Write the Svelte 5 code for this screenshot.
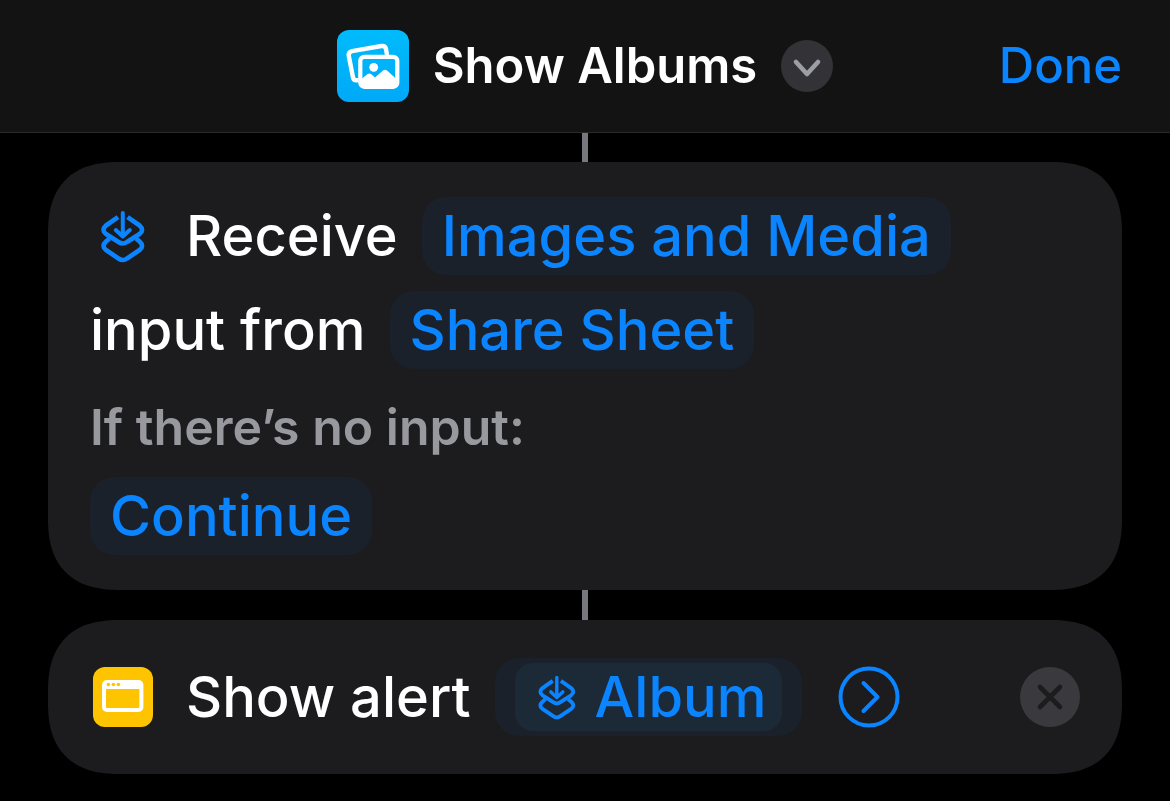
<script lang="ts">
  interface Props {
    title?: string;
    inputTypes?: string;
    source?: string;
    fallback?: string;
    variable?: string;
  }
  let {
    title = 'Show Albums',
    inputTypes = 'Images and Media',
    source = 'Share Sheet',
    fallback = 'Continue',
    variable = 'Album',
  }: Props = $props();
</script>

{#snippet inputIcon()}
  <svg class="input-icon" viewBox="0 0 46 54" aria-hidden="true">
    <g fill="none" stroke="currentColor" stroke-width="4.6" stroke-linejoin="round">
      <path d="M18 8.2 L6 16.5 Q1 21 6 25 L18.5 33 Q22.8 36 27 33 L39.6 25 Q44.6 21 39.6 16.5 L27.6 8.2" />
      <path d="M9.5 29.5 L6 32.5 Q1 37 6 41 L18.5 49.5 Q22.8 52.5 27 49.5 L39.6 41 Q44.6 37 39.6 32.5 L36 29.5" />
      <path d="M22.8 4 V27 M15.8 21 L22.8 27.5 L29.8 21" stroke-width="4" stroke-linecap="round" />
    </g>
  </svg>
{/snippet}

<div class="editor">
  <header>
    <div class="title">
      <svg class="app-icon" viewBox="0 0 72 72" aria-hidden="true">
        <defs>
          <linearGradient id="sky" x1="0" y1="0" x2="0" y2="1">
            <stop offset="0" stop-color="#00bbfc" />
            <stop offset="1" stop-color="#00a9f7" />
          </linearGradient>
        </defs>
        <rect width="72" height="72" rx="12" fill="url(#sky)" />
        <path
          d="M21.5 50.2 H19.5 Q16.5 50.2 16 47.5 L11.8 26 Q11.2 22 15 21.2 L44.5 16 Q48.3 15.5 49 19 L50 25"
          fill="none" stroke="#fff" stroke-width="4.4" stroke-linejoin="round"
        />
        <rect x="23.3" y="26.8" width="37" height="30" rx="4" fill="none" stroke="#fff" stroke-width="4.2" />
        <circle cx="36.7" cy="37.3" r="4.4" fill="#fff" />
        <path d="M24 49.5 L30.5 44 Q32.3 42.8 34 44 L38 47.5 L46 40.5 Q48 39 50 40.5 L60 49.5 V57 H24 Z" fill="#fff" />
      </svg>
      <h1>{title}</h1>
      <button class="menu" aria-label="Shortcut options">
        <svg viewBox="0 0 52 52" aria-hidden="true">
          <path d="M15 22 L26 34 L37 22" fill="none" stroke="#9d9da5" stroke-width="4.6" stroke-linecap="round" stroke-linejoin="round" />
        </svg>
      </button>
    </div>
    <button class="done">Done</button>
  </header>

  <main>
    <div class="connector"></div>
    <section class="card receive">
      <div class="row">
        <span class="icon-slot">{@render inputIcon()}</span>
        <span>Receive</span>
        <button class="chip">{inputTypes}</button>
      </div>
      <div class="row">
        <span>input from</span>
        <button class="chip">{source}</button>
      </div>
      <p>If there’s no input:</p>
      <div class="row">
        <button class="chip">{fallback}</button>
      </div>
    </section>

    <div class="connector"></div>
    <section class="card">
      <div class="row">
        <span class="icon-slot">
          <svg class="alert-icon" viewBox="0 0 60 60" aria-hidden="true">
            <rect width="60" height="60" rx="12" fill="#ffc400" />
            <rect x="11" y="15" width="37.4" height="28" rx="3" fill="none" stroke="#fff" stroke-width="4" />
            <path d="M11 15 H48 V22 H11 Z" fill="#fff" />
            <g fill="#ffc400">
              <circle cx="15.4" cy="17.5" r="1.8" />
              <circle cx="20.4" cy="17.5" r="1.8" />
              <circle cx="25.4" cy="17.5" r="1.8" />
            </g>
          </svg>
        </span>
        <span>Show alert</span>
        <button class="chip">
          <span class="token">{@render inputIcon()}{variable}</span>
        </button>
        <button class="expand" aria-label="Show more">
          <svg viewBox="0 0 62 62" aria-hidden="true">
            <g fill="none" stroke="currentColor" stroke-width="4" stroke-linecap="round" stroke-linejoin="round">
              <circle cx="31" cy="31" r="28.5" />
              <path d="M25.5 17 L39.5 31 L25.5 45" />
            </g>
          </svg>
        </button>
        <button class="remove" aria-label="Remove action">
          <svg viewBox="0 0 60 60" aria-hidden="true">
            <circle cx="30" cy="30" r="30" fill="#3a3a3e" />
            <path d="M20 20 L40 40 M40 20 L20 40" stroke="#1c1c1e" stroke-width="4.6" stroke-linecap="round" />
          </svg>
        </button>
      </div>
    </section>
  </main>
</div>

<style>
  :global(body) {
    margin: 0;
    background: #000;
  }
  .editor {
    min-height: 100vh;
    background: #000;
    color: #fff;
    font-family: Inter, "Liberation Sans", sans-serif;
  }
  svg { display: block; }
  button {
    margin: 0;
    padding: 0;
    border: 0;
    background: none;
    color: #0a84ff;
    font: inherit;
    cursor: pointer;
  }

  header {
    display: grid;
    grid-template-columns: 1fr auto 1fr;
    align-items: center;
    height: 132px;
    padding: 0 48px;
    border-bottom: 1px solid #2a2a2a;
    background: #131313;
  }
  .title {
    grid-column: 2;
    display: flex;
    align-items: center;
    gap: 24px;
  }
  .app-icon {
    width: 72px;
    height: 72px;
  }
  h1 {
    margin: 0;
    font-size: 49px;
    font-weight: 600;
    line-height: 62px;
  }
  .menu {
    width: 52px;
    height: 52px;
    border-radius: 50%;
    background: #333337;
  }
  .done {
    justify-self: end;
    font-size: 49px;
    font-weight: 500;
    line-height: 62px;
  }

  main {
    padding: 0 48px;
  }
  .connector {
    width: 6px;
    height: 30px;
    margin: 0 auto;
    background: #77777e;
  }
  .connector:first-child {
    height: 29px;
  }
  .card {
    padding: 38px 42px;
    border-radius: 60px;
    background: #1c1c1e;
    font-size: 56px;
    font-weight: 500;
    line-height: 78px;
  }
  /* continuous corners where the browser has them */
  @supports (corner-shape: superellipse(1.3)) {
    .card {
      border-radius: 72px;
      corner-shape: superellipse(1.3);
    }
  }
  .receive {
    padding: 35px 42px;
  }
  .row {
    display: flex;
    align-items: center;
    gap: 24px;
    white-space: nowrap;
  }
  .row + .row {
    margin-top: 16px;
  }
  .icon-slot {
    display: flex;
    justify-content: center;
    width: 66px;
    margin-right: 6px;
  }
  .input-icon {
    width: 46px;
    height: 54px;
    color: #0a84ff;
  }
  .alert-icon {
    width: 60px;
    height: 60px;
  }
  .chip {
    padding: 0 20px;
    border-radius: 24px;
    background: #1b212a;
  }
  p {
    margin: 28px 0 20px;
    color: #98989f;
    font-size: 50px;
    font-weight: 600;
    line-height: 60px;
  }
  .token {
    display: flex;
    align-items: center;
    gap: 18px;
    margin: 5px 0;
    padding: 0 16px 0 22px;
    border-radius: 18px;
    background: #1c2937;
    line-height: 68px;
  }
  .token .input-icon {
    width: 40px;
    height: 46px;
  }
  .expand {
    width: 62px;
    height: 62px;
    margin-left: 12px;
  }
  .remove {
    width: 60px;
    height: 60px;
    margin-left: auto;
  }
</style>
